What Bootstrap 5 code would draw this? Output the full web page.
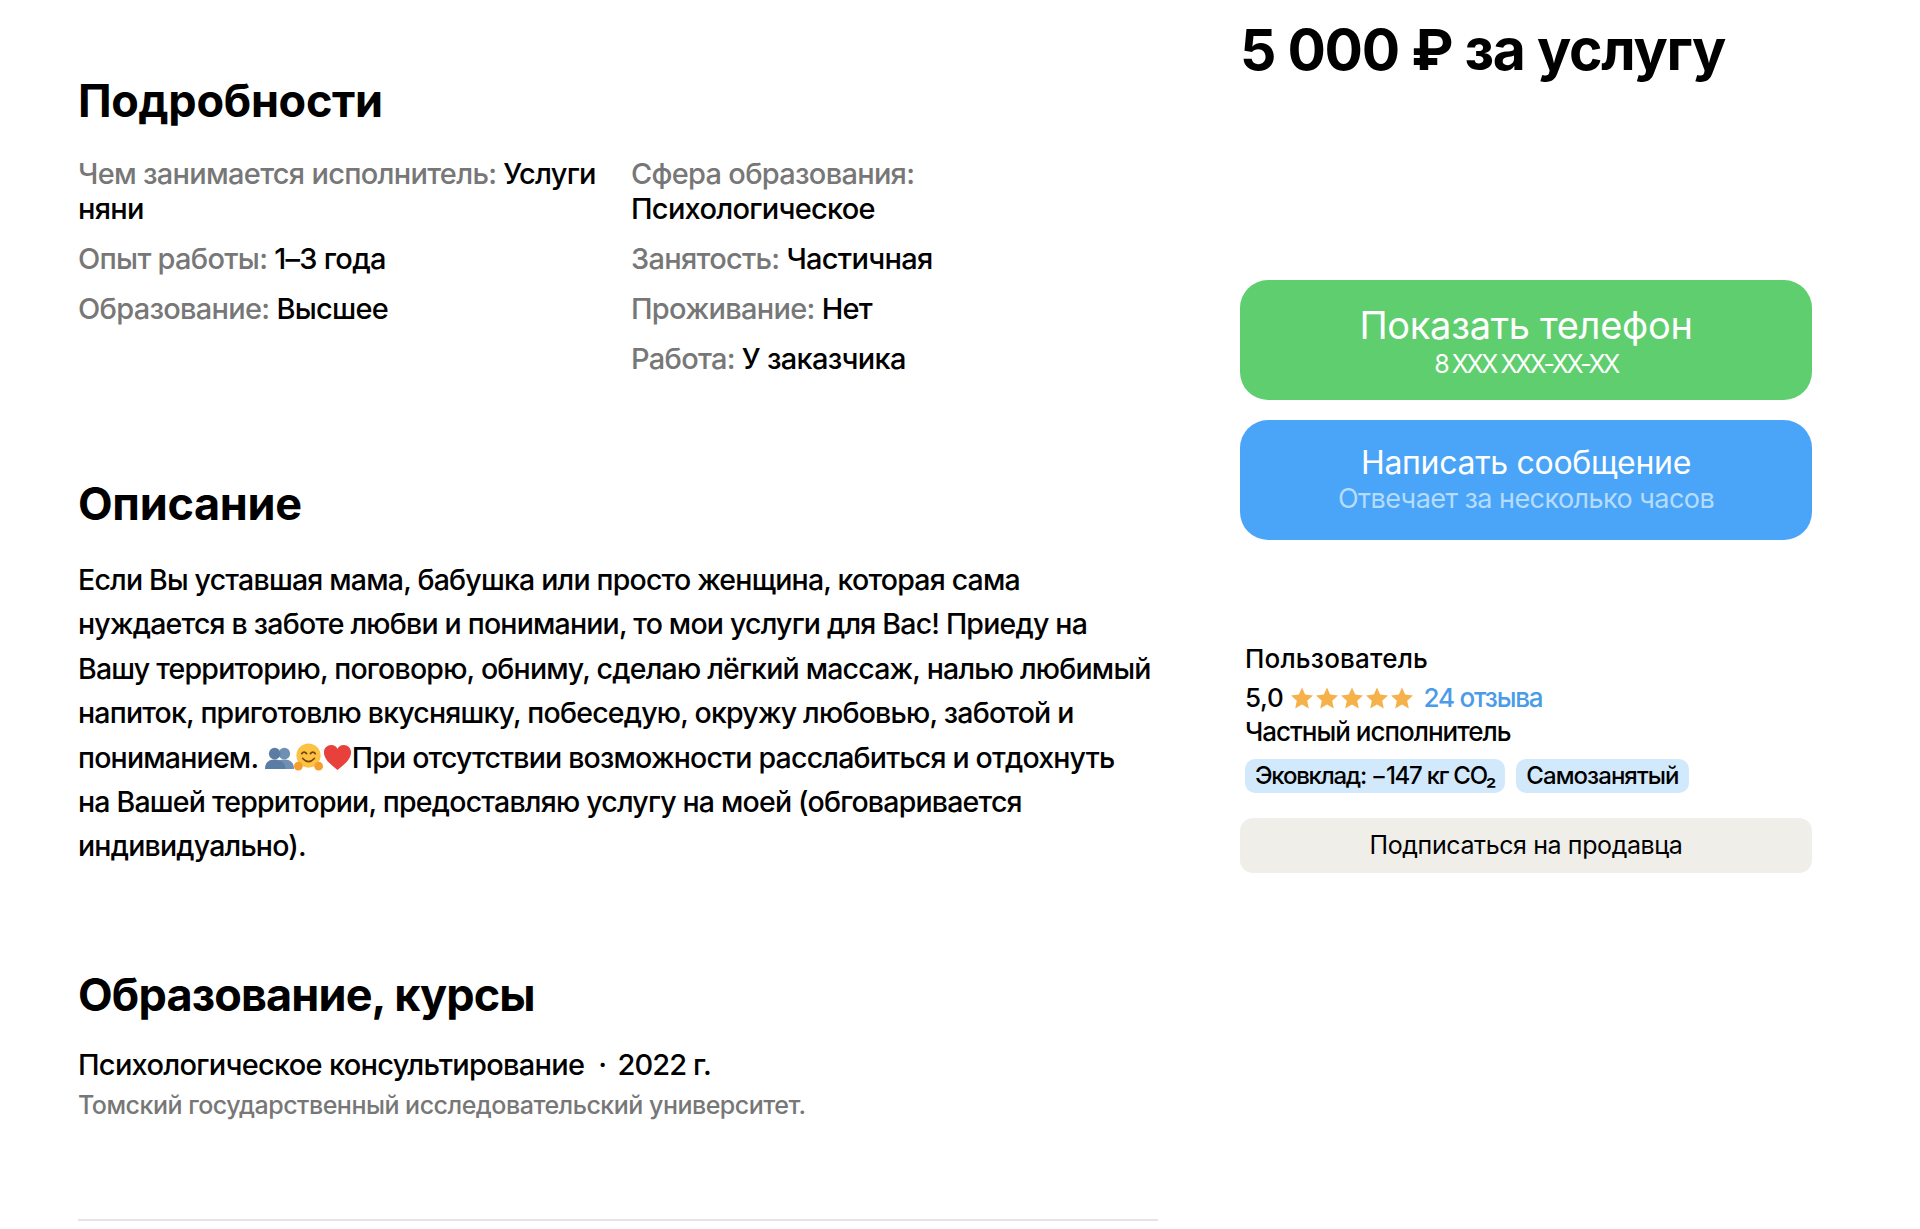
<!DOCTYPE html>
<html lang="ru">
<head>
    <meta charset="UTF-8" />
    <meta name="viewport" content="width=device-width, initial-scale=1.0" />
    <title>Услуги няни</title>
    <link href="https://cdn.jsdelivr.net/npm/bootstrap@5.3.3/dist/css/bootstrap.min.css" rel="stylesheet">
    <style>
        body {
            background-color: #fff;
            color: #000;
            font-family: Inter, "Noto Sans", sans-serif;
            font-weight: 450;
            overflow: hidden;
        }

        .page-wrap {
            padding-left: 78px;
            gap: 82px;
        }

        .main-col { width: 1080px; }
        .side-col { width: 572px; }

        .section-title {
            font-size: 45px;
            font-weight: 700;
            line-height: 56px;
            margin: 0;
            letter-spacing: -0.3px;
        }
        .edu-title { letter-spacing: -0.85px; }

        .details-block { padding-top: 73px; }
        .details-grid { margin-top: 27px; font-size: 29px; line-height: 35px; letter-spacing: -0.72px; }
        .details-left { width: 553px; padding-right: 20px; }
        .details-right { width: 527px; }
        .detail-item { margin-bottom: 15px; }
        .detail-key { color: #777; }

        .about-block { margin-top: 85px; }
        .about-text { margin: 26px 0 0; font-size: 28.5px; line-height: 44.4px; letter-spacing: -0.8px; }
        .emoji-icon { width: 29px; height: 29px; vertical-align: -4px; }

        .edu-block { margin-top: 98px; }
        .edu-name { margin-top: 22px; font-size: 29px; line-height: 40px; letter-spacing: -0.72px; }
        .edu-year { margin-left: -3px; letter-spacing: -0.9px; }
        .edu-place { margin-top: 1px; font-size: 25px; line-height: 38px; color: #777; letter-spacing: -0.5px; }
        .bottom-line { margin: 95px 0 0; border: 0; border-top: 2px solid #e4e4e4; opacity: 1; }

        .price-title {
            font-size: 57px;
            font-weight: 700;
            line-height: 70px;
            margin: 15px 0 0;
            letter-spacing: -1.25px;
        }

        .action-btn {
            display: block;
            width: 100%;
            height: 120px;
            border: 0;
            border-radius: 28px;
            color: #fff;
            padding: 0;
        }

        .action-btn:hover { color: #fff; }
        .btn-phone, .btn-phone:hover { background-color: #5fce6e; margin-top: 195px; padding-top: 2px; }
        .btn-write, .btn-write:hover { background-color: #4aa5f8; margin-top: 20px; padding-bottom: 2px; }
        .btn-main-phone { font-size: 38px; line-height: 46px; letter-spacing: -0.3px; }
        .btn-main-write { font-size: 32px; line-height: 40px; letter-spacing: -0.3px; }
        .btn-sub-phone { font-size: 25px; line-height: 32px; letter-spacing: -2.4px; }
        .btn-sub-write { font-size: 27px; line-height: 32px; letter-spacing: -0.55px; color: #b5dcfd; }

        .seller-box { margin-top: 99px; padding-left: 5px; font-size: 26px; letter-spacing: -0.3px; }
        .seller-name { line-height: 40px; letter-spacing: 0.2px; }
        .rating-line { line-height: 38px; }
        .star-row { gap: 1px; margin: 0 9px 0 7px; }
        .star-icon { width: 24px; height: 24px; fill: #f6b24a; display: block; }
        .reviews-link { color: #4a9be8; text-decoration: none; letter-spacing: -1.2px; }
        .seller-type { line-height: 30px; letter-spacing: -1px; }
        .tag-row { gap: 11px; margin-top: 12px; }
        .seller-tag {
            background-color: #d2e9fb;
            border-radius: 10px;
            padding: 0 10px;
            height: 34px;
            font-size: 24px;
            line-height: 34px;
            letter-spacing: -0.95px;
        }
        .tag-eco { letter-spacing: -1.25px; }

        .btn-follow, .btn-follow:hover {
            display: block;
            width: 100%;
            height: 55px;
            margin-top: 25px;
            border: 0;
            border-radius: 13px;
            background-color: #f0eee9;
            color: #000;
            font-size: 25px;
            letter-spacing: -0.4px;
            padding: 0;
        }
    </style>
</head>
<body>
    <div class="page-wrap d-flex align-items-start">
        <div class="main-col">
            <div class="details-block">
                <h2 class="section-title">Подробности</h2>
                <div class="details-grid d-flex">
                    <div class="details-left">
                        <div class="detail-item"><span class="detail-key">Чем занимается исполнитель:</span> Услуги няни</div>
                        <div class="detail-item"><span class="detail-key">Опыт работы:</span> 1–3 года</div>
                        <div class="detail-item"><span class="detail-key">Образование:</span> Высшее</div>
                    </div>
                    <div class="details-right">
                        <div class="detail-item"><span class="detail-key">Сфера образования:</span><br>Психологическое</div>
                        <div class="detail-item"><span class="detail-key">Занятость:</span> Частичная</div>
                        <div class="detail-item"><span class="detail-key">Проживание:</span> Нет</div>
                        <div class="detail-item"><span class="detail-key">Работа:</span> У заказчика</div>
                    </div>
                </div>
            </div>

            <div class="about-block">
                <h2 class="section-title">Описание</h2>
                <p class="about-text">Если Вы уставшая мама, бабушка или просто женщина, которая сама нуждается в заботе любви и понимании, то мои услуги для Вас! Приеду на Вашу территорию, поговорю, обниму, сделаю лёгкий массаж, налью любимый напиток, приготовлю вкусняшку, побеседую, окружу любовью, заботой и пониманием. <svg class="emoji-icon" viewBox="0 0 30 30"><circle cx="20" cy="11" r="6" fill="#6f8fb3"/><path d="M9 27c0-7 5-10 11-10s10 3 10 10z" fill="#6f8fb3"/><circle cx="10" cy="11" r="6" fill="#5b7da5"/><path d="M0 27c0-7 4-10 10-10s11 3 11 10z" fill="#5b7da5"/></svg><svg class="emoji-icon" viewBox="0 0 30 30"><circle cx="15" cy="13" r="12.500" fill="#fbc243"/><path d="M8 11q2.500-3 5 0M17 11q2.500-3 5 0" fill="none" stroke="#7a4210" stroke-width="1.800" stroke-linecap="round"/><path d="M9 16q6 6.500 12 0" fill="none" stroke="#7a4210" stroke-width="1.800" stroke-linecap="round"/><ellipse cx="4.500" cy="24" rx="4.500" ry="4.500" fill="#f59e2e"/><ellipse cx="25.500" cy="24" rx="4.500" ry="4.500" fill="#f59e2e"/></svg><svg class="emoji-icon" viewBox="0 0 30 30"><path d="M15 28C8 22 1 17 1 9.500 1 5 4.500 2 8.500 2c3 0 5.300 1.600 6.500 4 1.200-2.400 3.500-4 6.500-4C25.500 2 29 5 29 9.500 29 17 22 22 15 28z" fill="#e8413c"/></svg>При отсутствии возможности расслабиться и отдохнуть на&nbsp;Вашей территории, предоставляю услугу на моей (обговаривается индивидуально).</p>
            </div>

            <div class="edu-block">
                <h2 class="section-title edu-title">Образование, курсы</h2>
                <div class="edu-name">Психологическое консультирование &nbsp;·&nbsp; <span class="edu-year">2022 г.</span></div>
                <div class="edu-place">Томский государственный исследовательский университет.</div>
            </div>
            <hr class="bottom-line">
        </div>

        <div class="side-col">
            <h1 class="price-title">5 000 ₽ за услугу</h1>

            <button type="button" class="btn action-btn btn-phone">
                <div class="btn-main-phone">Показать телефон</div>
                <div class="btn-sub-phone">8 XXX XXX-XX-XX</div>
            </button>
            <button type="button" class="btn action-btn btn-write">
                <div class="btn-main-write">Написать сообщение</div>
                <div class="btn-sub-write">Отвечает за несколько часов</div>
            </button>

            <div class="seller-box">
                <div class="seller-name">Пользователь</div>
                <div class="rating-line d-flex align-items-center">
                    <span>5,0</span>
                    <span class="star-row d-flex">
                        <svg class="star-icon" viewBox="0 0 24 24"><path d="M12 1.500l3.200 7.100 7.800.9-5.800 5.200 1.600 7.700L12 18.500l-6.800 3.900 1.600-7.700L1 9.500l7.800-.9z"/></svg>
                        <svg class="star-icon" viewBox="0 0 24 24"><path d="M12 1.500l3.200 7.100 7.800.9-5.800 5.200 1.600 7.700L12 18.500l-6.800 3.900 1.600-7.700L1 9.500l7.800-.9z"/></svg>
                        <svg class="star-icon" viewBox="0 0 24 24"><path d="M12 1.500l3.200 7.100 7.800.9-5.800 5.200 1.600 7.700L12 18.500l-6.800 3.900 1.600-7.700L1 9.500l7.800-.9z"/></svg>
                        <svg class="star-icon" viewBox="0 0 24 24"><path d="M12 1.500l3.200 7.100 7.800.9-5.800 5.200 1.600 7.700L12 18.500l-6.800 3.900 1.600-7.700L1 9.500l7.800-.9z"/></svg>
                        <svg class="star-icon" viewBox="0 0 24 24"><path d="M12 1.500l3.200 7.100 7.800.9-5.800 5.200 1.600 7.700L12 18.500l-6.800 3.900 1.600-7.700L1 9.500l7.800-.9z"/></svg>
                    </span>
                    <a href="#" class="reviews-link">24 отзыва</a>
                </div>
                <div class="seller-type">Частный исполнитель</div>
                <div class="tag-row d-flex">
                    <span class="seller-tag tag-eco">Эковклад: −147 кг CO₂</span>
                    <span class="seller-tag">Самозанятый</span>
                </div>
            </div>
            <button type="button" class="btn btn-follow">Подписаться на продавца</button>
        </div>
    </div>
    <script src="https://cdn.jsdelivr.net/npm/bootstrap@5.3.3/dist/js/bootstrap.bundle.min.js"></script>
</body>
</html>
